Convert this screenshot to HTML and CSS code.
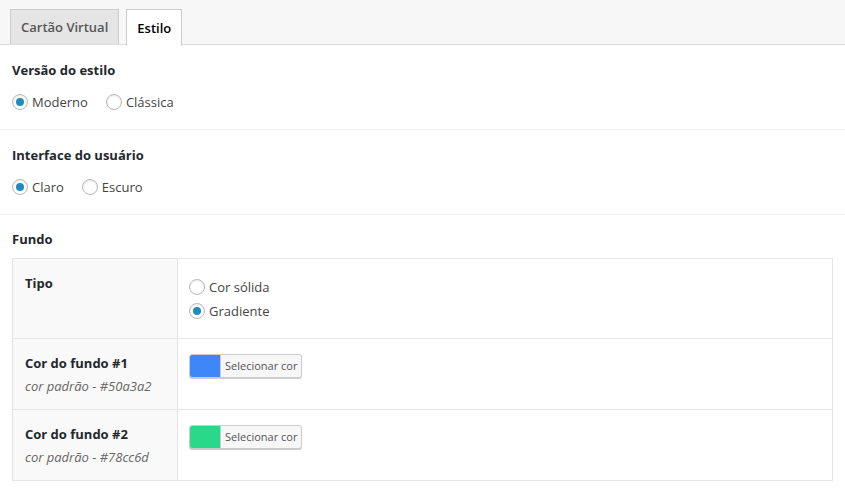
FILE: index.html
```html
<!DOCTYPE html>
<html lang="pt-BR">
<head>
<meta charset="UTF-8">
<title>Estilo</title>
<link rel="stylesheet" href="styles.css">
</head>
<body>
    <div class="tabs">
        <a class="tab">Cartão Virtual</a>
        <a class="tab active">Estilo</a>
    </div>

    <div class="section">
        <h3>Versão do estilo</h3>
        <div class="options">
            <label class="radio"><span class="dot on"></span>Moderno</label>
            <label class="radio"><span class="dot"></span>Clássica</label>
        </div>
    </div>

    <div class="section">
        <h3>Interface do usuário</h3>
        <div class="options">
            <label class="radio"><span class="dot on"></span>Claro</label>
            <label class="radio"><span class="dot"></span>Escuro</label>
        </div>
    </div>

    <div class="section last">
        <h3>Fundo</h3>
        <table class="form-table">
            <tr class="row-type">
                <th>Tipo</th>
                <td>
                    <label class="radio"><span class="dot"></span>Cor sólida</label>
                    <label class="radio"><span class="dot on"></span>Gradiente</label>
                </td>
            </tr>
            <tr class="row-color">
                <th>Cor do fundo #1<em>cor padrão - #50a3a2</em></th>
                <td>
                    <button class="color-btn"><span class="swatch blue"></span><span class="btn-text">Selecionar cor</span></button>
                </td>
            </tr>
            <tr class="row-color">
                <th>Cor do fundo #2<em>cor padrão - #78cc6d</em></th>
                <td>
                    <button class="color-btn"><span class="swatch green"></span><span class="btn-text">Selecionar cor</span></button>
                </td>
            </tr>
        </table>
    </div>
</body>
</html>
```

FILE: styles.css
```css
body{
    margin: 0;
    background: #fff;
    color: #444;
    font-family: "Open Sans", "Noto Sans", sans-serif;
    font-size: 13px;
}
.tabs{
    display: flex;
    gap: 7px;
    height: 35px;
    padding: 9px 0 0 10px;
    background: #f7f7f7;
    border-bottom: 1px solid #ddd;
}
.tab{
    display: flex;
    align-items: center;
    padding: 0 10px;
    background: #e5e5e5;
    border: 1px solid #ccc;
    border-bottom: none;
    color: #555;
    font-size: 13px;
    font-weight: 600;
}
.tab.active{
    background: #fff;
    color: #000;
    height: 36px;
}
.section{
    padding: 15px 12px 17px;
    border-bottom: 1px solid #eee;
}
.section.last{
    border-bottom: none;
    padding-top: 14px;
    padding-bottom: 10px;
}
.section h3{
    margin: 0;
    font-size: 13px;
    font-weight: 700;
    color: #23282d;
    line-height: 20px;
}
.options{
    display: flex;
    gap: 18px;
    margin-top: 12px;
}
.radio{
    display: flex;
    align-items: center;
    gap: 4px;
    line-height: 20px;
}
.dot{
    width: 14px;
    height: 14px;
    border: 1px solid #b4b9be;
    border-radius: 50%;
    background: #fff;
    box-shadow: inset 0 1px 2px rgba(0,0,0,.1);
    position: relative;
}
.dot.on::after{
    content: "";
    position: absolute;
    left: 3px;
    top: 3px;
    width: 8px;
    height: 8px;
    border-radius: 50%;
    background: #1e8cbe;
}
.form-table{
    width: 100%;
    margin-top: 9px;
    border-collapse: collapse;
    border: 1px solid #e5e5e5;
}
.form-table th{
    width: 140px;
    padding: 14px 12px 15px;
    background: #f9f9f9;
    border-right: 1px solid #e5e5e5;
    text-align: left;
    vertical-align: top;
    font-weight: 700;
    color: #23282d;
    line-height: 20px;
}
.form-table th em{
    display: block;
    margin-top: 3px;
    font-weight: 400;
    color: #666;
}
.form-table td{
    padding: 15px 11px;
    vertical-align: top;
}
.form-table tr + tr th, .form-table tr + tr td{
    border-top: 1px solid #e5e5e5;
}
.row-type td{
    padding-top: 18px;
    padding-bottom: 17px;
}
.row-type td .radio + .radio{
    margin-top: 4px;
}
.row-color th, .row-color td{
    padding-top: 14px;
    padding-bottom: 13px;
}
.row-color td{
    padding-top: 15px;
}
.color-btn{
    display: flex;
    padding: 0;
    height: 24px;
    border: 1px solid #ccc;
    border-radius: 3px;
    background: #f7f7f7;
    box-shadow: 0 1px 0 #ccc;
    overflow: hidden;
    font-family: inherit;
}
.swatch{
    width: 30px;
    height: 100%;
}
.swatch.blue{
    background: #3f86f8;
}
.swatch.green{
    background: #2ad88a;
}
.btn-text{
    padding: 0 4px;
    line-height: 22px;
    font-size: 11px;
    color: #555;
    border-left: 1px solid #ccc;
}
```
